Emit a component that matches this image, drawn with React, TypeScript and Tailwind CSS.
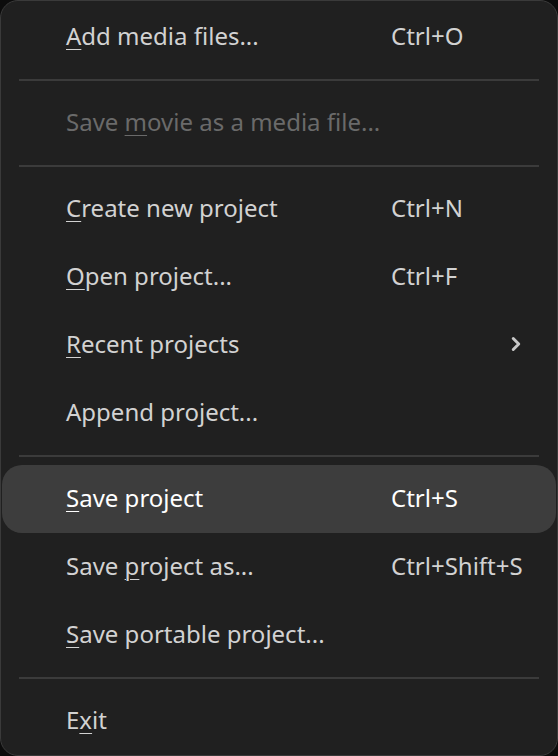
import { ChevronRight } from "lucide-react";

type Entry =
  | { kind: "sep" }
  | {
      kind: "item";
      label: string;
      key?: number; // index of underlined letter
      shortcut?: string;
      disabled?: boolean;
      active?: boolean;
      submenu?: boolean;
    };

const entries: Entry[] = [
  { kind: "item", label: "Add media files...", key: 0, shortcut: "Ctrl+O" },
  { kind: "sep" },
  { kind: "item", label: "Save movie as a media file...", key: 5, disabled: true },
  { kind: "sep" },
  { kind: "item", label: "Create new project", key: 0, shortcut: "Ctrl+N" },
  { kind: "item", label: "Open project...", key: 0, shortcut: "Ctrl+F" },
  { kind: "item", label: "Recent projects", key: 0, submenu: true },
  { kind: "item", label: "Append project..." },
  { kind: "sep" },
  { kind: "item", label: "Save project", key: 0, shortcut: "Ctrl+S", active: true },
  { kind: "item", label: "Save project as...", key: 5, shortcut: "Ctrl+Shift+S" },
  { kind: "item", label: "Save portable project...", key: 0 },
  { kind: "sep" },
  { kind: "item", label: "Exit", key: 1 },
];

const Label = ({ text, at }: { text: string; at?: number }) => {
  if (at === undefined) return <>{text}</>;
  return (
    <>
      {text.slice(0, at)}
      <span className="underline decoration-1 underline-offset-[4px]">{text[at]}</span>
      {text.slice(at + 1)}
    </>
  );
};

const App = () => {
  return (
    <div className="w-[558px] h-[756px] bg-[#0c0c0c]">
      <div
        className="h-[756px] rounded-[18px] border border-[#3a3a3a] bg-[#202020] px-px pt-[2px] text-[24px] leading-none text-[#d2d2d2]"
        style={{ fontFamily: '"Noto Sans", "Open Sans", sans-serif' }}
      >
        {entries.map((e, i) =>
          e.kind === "sep" ? (
            <div key={i} className="h-[18px] flex items-center px-[17px]">
              <div className="h-[2px] w-full bg-[#3b3b3b]" />
            </div>
          ) : (
            <div
              key={i}
              className={
                "h-[68px] pb-[2px] flex items-center rounded-[20px] " +
                (e.active ? "bg-[#3d3d3d] text-white" : e.disabled ? "text-[#6a6a6a]" : "")
              }
            >
              <div className="pl-[64px] w-[389px] whitespace-nowrap">
                <Label text={e.label} at={e.key} />
              </div>
              <div className="flex-1 flex items-center whitespace-nowrap">
                {e.shortcut}
                {e.submenu && (
                  <ChevronRight className="ml-auto mr-[29px] h-[22px] w-[22px] text-[#c8c8c8]" strokeWidth={3.2} />
                )}
              </div>
            </div>
          )
        )}
      </div>
    </div>
  );
};

export default App;
